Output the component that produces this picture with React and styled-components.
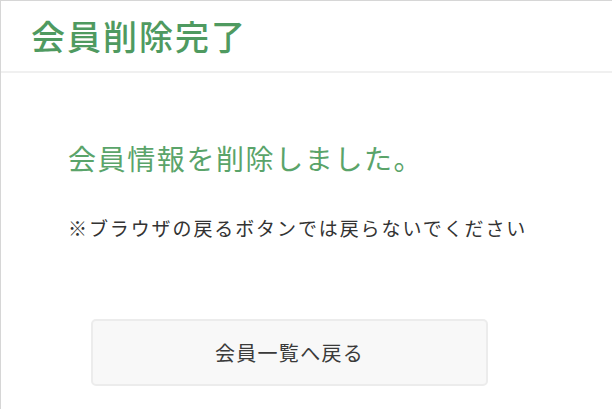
import React from 'react';
import styled, { createGlobalStyle } from 'styled-components';

const GlobalStyle = createGlobalStyle`
    html, body {
        margin: 0;
        padding: 0;
        background: #ffffff;
    }
    body {
        font-family: "Noto Sans CJK JP", "Noto Sans", sans-serif;
        color: #333333;
    }
`;

const Panel = styled.div`
    width: 640px;
    height: 420px;
    box-sizing: border-box;
    border-top: 1px solid #d6d6d6;
    border-left: 1px solid #d6d6d6;
`;

const Header = styled.div`
    height: 72px;
    box-sizing: border-box;
    border-bottom: 2px solid #f0f0f0;
    display: flex;
    align-items: center;
    padding-left: 30px;
`;

const Title = styled.h1`
    margin: 0;
    font-size: 34px;
    font-weight: 500;
    line-height: 40px;
    letter-spacing: 2px;
    color: #4f9a60;
`;

const Body = styled.div`
    padding: 65px 0 0 67px;
`;

const Message = styled.h2`
    margin: 0;
    font-size: 28px;
    font-weight: 400;
    line-height: 40px;
    letter-spacing: 1.6px;
    color: #5aa46a;
`;

const Note = styled.p`
    margin: 35px 0 0;
    font-size: 19px;
    line-height: 30px;
    letter-spacing: 1.9px;
    color: #333333;
`;

const BackButton = styled.button`
    display: flex;
    align-items: center;
    justify-content: center;
    margin: 76px 0 0 23px;
    width: 397px;
    height: 67px;
    background: #f8f8f8;
    border: 2px solid #ececec;
    border-radius: 5px;
    font-family: inherit;
    font-size: 20px;
    letter-spacing: 1.3px;
    color: #3a3a3a;
    cursor: pointer;
`;

export default function App() {
    return (
        <>
            <GlobalStyle />
            <Panel>
                <Header>
                    <Title>会員削除完了</Title>
                </Header>
                <Body>
                    <Message>会員情報を削除しました。</Message>
                    <Note>※ブラウザの戻るボタンでは戻らないでください</Note>
                    <BackButton>会員一覧へ戻る</BackButton>
                </Body>
            </Panel>
        </>
    );
}
